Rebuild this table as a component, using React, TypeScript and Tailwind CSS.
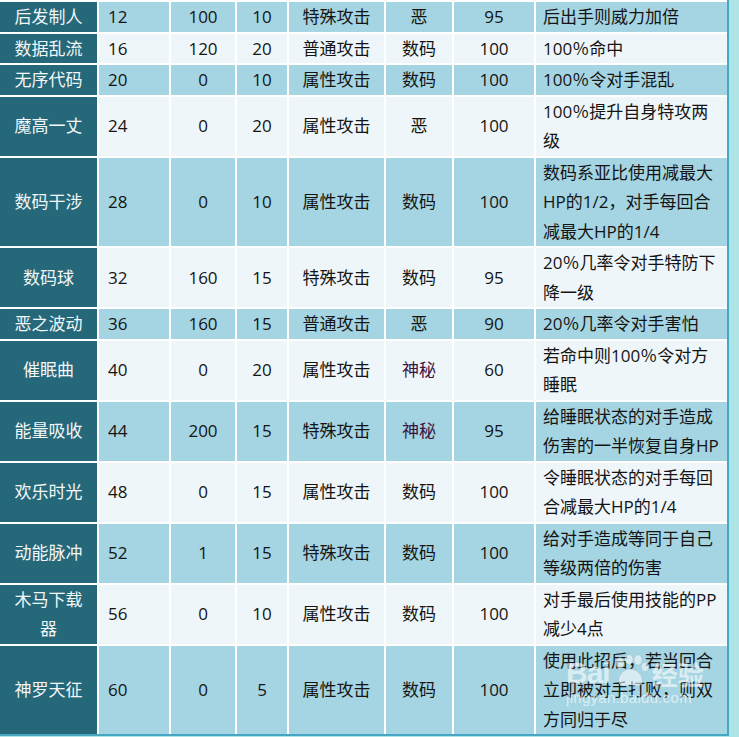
import React from "react";

type Row = [string, string, string, string, string, string, string, string];

const rows: Row[] = [
  ["后发制人", "12", "100", "10", "特殊攻击", "恶", "95", "后出手则威力加倍"],
  ["数据乱流", "16", "120", "20", "普通攻击", "数码", "100", "100％命中"],
  ["无序代码", "20", "0", "10", "属性攻击", "数码", "100", "100％令对手混乱"],
  ["魔高一丈", "24", "0", "20", "属性攻击", "恶", "100", "100％提升自身特攻两级"],
  ["数码干涉", "28", "0", "10", "属性攻击", "数码", "100", "数码系亚比使用减最大HP的1/2，对手每回合减最大HP的1/4"],
  ["数码球", "32", "160", "15", "特殊攻击", "数码", "95", "20％几率令对手特防下降一级"],
  ["恶之波动", "36", "160", "15", "普通攻击", "恶", "90", "20％几率令对手害怕"],
  ["催眠曲", "40", "0", "20", "属性攻击", "神秘", "60", "若命中则100％令对方睡眠"],
  ["能量吸收", "44", "200", "15", "特殊攻击", "神秘", "95", "给睡眠状态的对手造成伤害的一半恢复自身HP"],
  ["欢乐时光", "48", "0", "15", "属性攻击", "数码", "100", "令睡眠状态的对手每回合减最大HP的1/4"],
  ["动能脉冲", "52", "1", "15", "特殊攻击", "数码", "100", "给对手造成等同于自己等级两倍的伤害"],
  ["木马下载器", "56", "0", "10", "属性攻击", "数码", "100", "对手最后使用技能的PP减少4点"],
  ["神罗天征", "60", "0", "5", "属性攻击", "数码", "100", "使用此招后，若当回合立即被对手打败，则双方同归于尽"],
];

const FONT = { fontFamily: '"Open Sans", "Noto Sans CJK SC", sans-serif' };

function Paw() {
  return (
    <svg width="40" height="34" viewBox="0 0 40 34" className="mx-[1px]">
      <g fill="rgba(255,255,255,0.55)" stroke="rgba(150,170,180,0.35)" strokeWidth="0.8">
        <ellipse cx="9" cy="9" rx="4" ry="5.5" />
        <ellipse cx="18" cy="5.5" rx="4" ry="5" />
        <ellipse cx="27" cy="6" rx="4" ry="5" />
        <ellipse cx="34" cy="13" rx="3.6" ry="4.6" />
        <path d="M8 29 C6 22 13 15 19 15 C26 15 33 22 31 29 C29 34 23 31 19 31 C15 31 10 34 8 29 Z" />
      </g>
    </svg>
  );
}

export default function App() {
  return (
    <div className="w-[739px] h-[737px] bg-[#ade5e6] overflow-hidden" style={FONT}>
      <div className="relative w-fit border-r-2 border-b-2 border-[#45a7c1]">
        <div className="grid grid-cols-[97px_70px_64px_50px_95px_66px_80px_191px] gap-[2px] bg-white pt-[2px] text-[17px] leading-[29.5px] text-[#141414]">
          {rows.map((r, i) => {
            const bg = i % 2 === 0 ? "bg-[#a5d4e2]" : "bg-[#eef6f9]";
            return (
              <React.Fragment key={i}>
                <div className="flex items-center justify-center bg-[#25687a] px-[7px] text-center text-[#f3f7f7]">
                  {r[0]}
                </div>
                <div className={`flex items-center pl-[9px] ${bg}`}>{r[1]}</div>
                <div className={`flex items-center justify-center ${bg}`}>{r[2]}</div>
                <div className={`flex items-center justify-center ${bg}`}>{r[3]}</div>
                <div className={`flex items-center justify-center ${bg}`}>{r[4]}</div>
                <div className={`flex items-center justify-center ${bg}`}>
                  <span className={r[5] === "神秘" ? "text-[#3a1242]" : ""}>{r[5]}</span>
                </div>
                <div className={`flex items-center justify-center ${bg}`}>{r[6]}</div>
                <div className={`flex items-center pl-[7px] pr-[7px] ${bg}`}>{r[7]}</div>
              </React.Fragment>
            );
          })}
        </div>
        <div className="pointer-events-none absolute left-[566px] top-[654px] flex flex-col items-start text-white/60">
          <div className="flex items-end">
            <span className="text-[30px] font-bold leading-[30px] tracking-[-1px]" style={{ fontFamily: '"Liberation Sans", sans-serif' }}>
              Bai
            </span>
            <Paw />
            <span className="text-[26px] font-bold leading-[28px]" style={{ fontFamily: '"Noto Sans CJK SC", sans-serif' }}>
              经验
            </span>
          </div>
          <span className="mt-[2px] text-[15px] leading-[16px] tracking-[0.3px]" style={{ fontFamily: '"Liberation Sans", sans-serif' }}>
            jingyan.baidu.com
          </span>
        </div>
      </div>
    </div>
  );
}
